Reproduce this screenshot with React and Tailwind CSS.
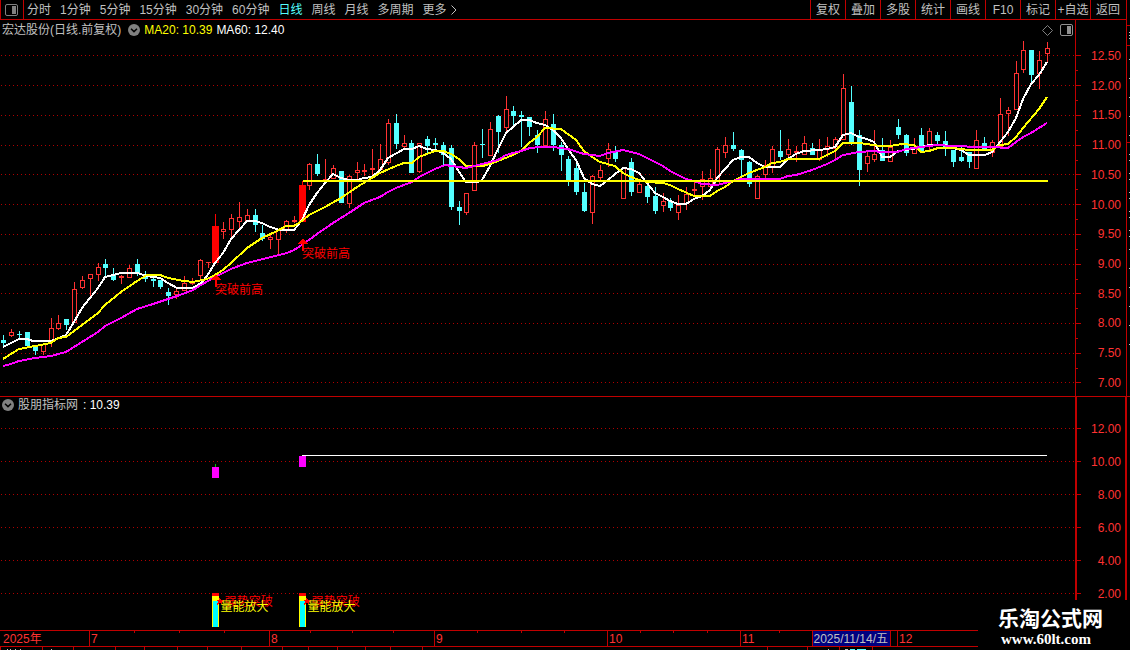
/**
 * ========================================
 * K线图 - 日线
 * ========================================
 */

const PERIODS = ["分时", "1分钟", "5分钟", "15分钟", "30分钟", "60分钟", "日线", "周线", "月线", "多周期"];

const TOOLS = ["复权", "叠加", "多股", "统计", "画线", "F10", "标记", "+自选", "返回"];

const PRICE_LABELS = ["12.50", "12.00", "11.50", "11.00", "10.50", "10.00", "9.50", "9.00", "8.50", "8.00", "7.50", "7.00"];
const PRICE_LINES = [55, 85, 115, 145, 174, 204, 234, 264, 293, 323, 353, 382];

const SUB_LABELS = ["12.00", "10.00", "8.00", "6.00", "4.00", "2.00"];
const SUB_LINES = [428, 461, 494, 527, 560, 593];

// [x, high, body top, body bottom, low, kind]  u = up, d = down, s = breakout
const CANDLES = [
  [3, 335, 340, 343, 347, "d"], [11, 329, 332, 336, 337, "u"], [19, 331, 334, 335, 338, "d"],
  [27, 332, 332, 346, 346, "d"], [35, 346, 346, 351, 355, "d"], [43, 344, 344, 352, 355, "u"],
  [51, 318, 328, 342, 347, "u"], [58, 315, 323, 329, 330, "u"], [66, 319, 319, 325, 330, "d"],
  [74, 282, 289, 323, 323, "u"], [82, 276, 280, 288, 289, "u"], [90, 274, 274, 279, 296, "u"],
  [98, 263, 267, 275, 281, "u"], [105, 259, 264, 268, 276, "d"], [113, 268, 274, 280, 281, "d"],
  [121, 275, 276, 278, 284, "u"], [129, 265, 268, 278, 278, "u"], [137, 259, 264, 273, 276, "d"],
  [145, 271, 276, 279, 282, "d"], [153, 277, 279, 281, 287, "d"], [160, 280, 280, 287, 289, "d"],
  [168, 288, 292, 296, 305, "d"], [176, 289, 291, 295, 299, "u"], [184, 276, 283, 291, 291, "u"],
  [192, 278, 282, 284, 285, "u"], [200, 259, 260, 276, 280, "u"], [208, 262, 262, 263, 268, "u"],
  [215, 214, 226, 263, 263, "s"], [223, 222, 229, 232, 239, "u"], [231, 214, 218, 230, 238, "u"],
  [239, 202, 217, 222, 229, "u"], [247, 209, 215, 221, 221, "u"], [255, 209, 215, 225, 232, "d"],
  [262, 225, 233, 239, 241, "d"], [270, 235, 237, 240, 249, "u"], [278, 230, 230, 240, 254, "u"],
  [286, 220, 221, 230, 233, "u"], [294, 216, 220, 222, 223, "u"], [302, 181, 185, 222, 222, "s"],
  [309, 163, 164, 186, 190, "u"], [317, 154, 164, 174, 176, "d"], [325, 159, 179, 180, 180, "u"],
  [333, 165, 168, 179, 179, "u"], [341, 171, 171, 203, 203, "d"], [349, 175, 176, 204, 208, "u"],
  [357, 162, 170, 173, 179, "u"], [364, 164, 170, 172, 176, "u"], [372, 149, 168, 170, 176, "u"],
  [380, 144, 159, 170, 170, "u"], [388, 119, 123, 163, 165, "u"], [396, 114, 123, 144, 149, "d"],
  [404, 135, 143, 147, 149, "u"], [411, 140, 143, 173, 173, "d"], [419, 143, 143, 172, 173, "u"],
  [427, 136, 139, 146, 153, "d"], [435, 138, 143, 145, 150, "d"], [443, 142, 145, 155, 165, "d"],
  [451, 145, 148, 207, 210, "d"], [459, 201, 207, 211, 225, "d"], [466, 193, 193, 213, 215, "u"],
  [474, 142, 145, 191, 191, "u"], [482, 129, 144, 145, 158, "d"], [490, 122, 129, 156, 156, "u"],
  [498, 115, 116, 132, 153, "d"], [506, 96, 109, 128, 132, "u"], [513, 106, 111, 116, 126, "d"],
  [521, 111, 115, 117, 147, "d"], [529, 117, 117, 127, 136, "d"], [537, 130, 135, 145, 153, "d"],
  [545, 111, 119, 146, 146, "u"], [553, 114, 124, 145, 151, "d"], [561, 142, 145, 155, 171, "d"],
  [568, 156, 159, 181, 186, "d"], [576, 159, 168, 192, 195, "d"], [584, 183, 192, 211, 212, "d"],
  [592, 175, 176, 213, 224, "u"], [600, 165, 170, 178, 182, "u"], [608, 143, 149, 159, 167, "u"],
  [615, 146, 151, 159, 162, "d"], [623, 167, 168, 199, 199, "u"], [631, 158, 162, 192, 196, "d"],
  [639, 180, 184, 193, 193, "u"], [647, 183, 186, 197, 203, "d"], [655, 187, 196, 211, 214, "d"],
  [663, 193, 201, 206, 212, "u"], [670, 198, 201, 208, 211, "d"], [678, 195, 205, 213, 220, "u"],
  [686, 187, 194, 204, 210, "u"], [694, 180, 189, 191, 195, "u"], [702, 171, 179, 187, 200, "u"],
  [710, 169, 178, 187, 190, "u"], [717, 147, 149, 185, 185, "u"], [725, 137, 145, 153, 158, "u"],
  [733, 132, 145, 149, 151, "d"], [741, 149, 150, 160, 176, "d"], [749, 161, 162, 184, 187, "d"],
  [757, 175, 176, 199, 199, "u"], [765, 160, 165, 175, 179, "u"], [772, 146, 149, 167, 173, "u"],
  [780, 130, 151, 157, 160, "d"], [788, 139, 149, 155, 158, "u"], [796, 146, 151, 153, 162, "u"],
  [804, 136, 143, 155, 155, "u"], [812, 143, 148, 155, 155, "d"], [819, 139, 149, 160, 161, "u"],
  [827, 137, 146, 150, 157, "u"], [835, 137, 139, 149, 160, "u"], [843, 74, 88, 140, 140, "u"],
  [851, 86, 102, 144, 145, "d"], [859, 130, 135, 170, 186, "d"], [867, 152, 156, 164, 172, "u"],
  [874, 130, 154, 160, 162, "u"], [882, 138, 150, 161, 161, "d"], [890, 140, 147, 162, 162, "u"],
  [898, 119, 127, 135, 139, "d"], [906, 134, 135, 153, 156, "d"], [914, 138, 148, 154, 154, "u"],
  [921, 128, 135, 151, 151, "d"], [929, 128, 131, 145, 150, "u"], [937, 132, 135, 141, 145, "d"],
  [945, 131, 141, 149, 156, "d"], [953, 150, 150, 162, 167, "d"], [961, 145, 157, 161, 162, "d"],
  [969, 152, 152, 162, 168, "d"], [976, 130, 140, 169, 169, "u"], [984, 137, 143, 150, 150, "d"],
  [992, 140, 142, 153, 157, "u"], [1000, 98, 114, 147, 147, "u"], [1008, 107, 110, 114, 136, "u"],
  [1016, 61, 73, 110, 110, "u"], [1023, 41, 50, 70, 73, "u"], [1031, 50, 50, 75, 82, "d"],
  [1039, 51, 60, 74, 89, "u"], [1047, 42, 48, 54, 62, "u"],
];

const MA_SHORT =
  "3,347 19,339 27,339 33,341 51,341 66,335 74,322 82,308 98,288 105,277 121,273 137,273 147,276 160,278 168,283 177,288 193,288 201,283 207,276 215,263 223,253 231,239 239,230 247,221 255,221 262,223 270,227 280,230 294,230 302,220 309,205 317,193 325,183 333,174 341,178 349,180 357,180 364,178 372,177 380,170 388,158 404,149 412,149 419,146 427,149 435,150 443,153 451,159 459,172 466,182 478,182 482,180 490,166 498,149 506,133 513,127 521,120 529,120 537,123 545,125 553,130 561,138 568,149 576,160 584,178 592,184 600,186 608,180 615,174 623,168 631,169 639,173 647,183 655,193 663,197 670,201 678,204 686,204 694,199 702,196 710,190 717,178 725,169 733,160 741,157 749,157 757,163 765,167 780,167 788,159 796,154 804,151 819,150 827,149 835,147 843,135 851,133 859,137 867,139 874,142 882,157 890,157 898,151 913,149 921,147 929,145 945,145 953,148 961,150 969,155 985,155 992,152 1000,142 1008,132 1016,118 1023,99 1031,84 1039,75 1047,62";

const MA_MID =
  "3,359 19,349 35,346 51,343 58,338 66,337 82,325 98,313 105,305 121,292 137,281 147,275 160,275 168,278 184,281 193,282 207,279 215,275 223,270 231,263 247,248 262,238 277,231 286,226 294,226 302,221 309,215 325,207 341,198 357,187 367,181 380,173 396,166 404,163 412,163 419,157 435,151 443,151 451,154 459,159 466,166 483,166 498,161 513,155 521,151 529,143 537,137 545,128 561,129 576,140 584,151 592,157 600,162 615,166 623,173 631,177 639,180 647,182 663,183 670,185 678,189 694,196 710,196 717,191 725,187 733,181 749,173 765,167 772,163 780,162 788,159 819,159 827,155 835,151 843,143 859,143 874,145 880,146 890,146 902,144 914,145 921,152 929,151 938,148 953,148 969,150 992,150 1000,145 1008,144 1016,137 1023,128 1039,109 1047,97";

const MA_LONG =
  "3,366 11,364 19,361 35,358 51,356 66,352 82,342 98,332 105,326 121,318 137,309 153,304 168,299 180,295 193,290 201,285 215,277 231,269 247,263 263,259 287,253 294,250 302,245 317,234 333,223 349,213 364,203 380,197 388,192 396,188 412,182 419,177 435,169 445,165 466,168 482,164 498,160 506,155 521,151 530,148 540,147 553,147 568,149 584,154 600,156 608,153 623,150 639,154 663,166 670,171 686,179 694,181 702,184 717,185 725,183 741,179 757,179 780,179 788,176 796,175 812,170 827,164 835,160 843,155 859,152 873,151 882,152 897,152 907,149 921,147 937,145 953,146 980,147 992,147 1008,148 1016,142 1023,137 1031,133 1047,123";

const MINOR_DATES = [134, 179, 224, 310, 352, 393, 477, 521, 564, 640, 673, 707, 779];
const FOOT_TICKS = [0, 42, 73, 115, 144, 177, 207, 241, 282, 308, 337, 365, 390, 422, 767, 807, 839, 872];
const SIDE_MARKS = [32, 35, 38, 59, 78, 97, 116, 135, 154, 160, 173, 179, 192, 198, 211, 217, 230, 236, 249, 268, 287, 306, 325, 344];

const PanelIcon = ({ className }) => (
  <svg viewBox="0 0 13 12" className={className} aria-hidden="true">
    <rect x="0.5" y="0.5" width="12" height="11" rx="1.5" fill="none" stroke="currentColor" />
    <rect x="7" y="2" width="4" height="8" fill="currentColor" />
  </svg>
);

const ToggleButton = ({ label }) => (
  <button type="button" aria-label={label} className="shrink-0">
    <svg viewBox="0 0 12 12" className="block w-3 h-3">
      <circle cx="6" cy="6" r="6" fill="#808080" />
      <path d="M3 4.8 L6 7.6 L9 4.8" fill="none" stroke="#000" strokeWidth="1.5" />
    </svg>
  </button>
);

const GridLines = ({ lines }) =>
  lines.map((y) => (
    <line key={y} x1="1" x2="1075" y1={y + 0.5} y2={y + 0.5} stroke="#b00000" strokeDasharray="1 3" />
  ));

const Candle = ({ data }) => {
  const [x, high, top, bottom, low, kind] = data;
  const color = kind === "d" ? "#54ffff" : kind === "s" ? "#ff0000" : "#ff3232";
  const hollow = kind === "u" && bottom - top > 2;
  const half = kind === "s" ? 3 : 2;

  return (
    <g>
      <rect x={x} y={high} width="1" height={Math.max(low - high, 1)} fill={color} />
      {hollow ? (
        <rect x={x - 1.5} y={top + 0.5} width="4" height={bottom - top - 1} fill="#000" stroke={color} />
      ) : (
        <rect x={x - half} y={top} width={half * 2 + 1} height={bottom - top} fill={color} />
      )}
    </g>
  );
};

const BuyArrow = ({ x, y }) => (
  <path d={`M${x} ${y} l5 6 h-4 v7 h-2 v-7 h-4 z`} fill="#ff0000" />
);

const VolumeBar = ({ x }) => (
  <g>
    <rect x={x} y="593" width="7" height="34" fill="#ffff00" />
    <rect x={x} y="593" width="7" height="3" fill="#ff0000" />
    <rect x={x + 1} y="601" width="5" height="26" fill="#00ffff" />
    <path
      d={`M${x + 8} 597 l1 3 h3 l-2 2 l1 3 l-3 -2 l-3 2 l1 -3 l-2 -2 h3 z`}
      fill="#ff0000"
    />
  </g>
);

const Toolbar = () => (
  <header className="flex h-5 items-stretch border-b border-[#c00000] pr-px text-[#c0c0c0]">
    <button type="button" aria-label="侧栏" className="w-6 shrink-0 border-x border-[#c00000] pl-1">
      <PanelIcon className="block h-3 w-[13px] text-[#808080]" />
    </button>
    <nav className="flex grow items-center gap-[9px] pl-[3px]">
      {PERIODS.map((name) => (
        <button key={name} type="button" className={name === "日线" ? "text-[#54ffff]" : ""}>
          {name}
        </button>
      ))}
      <button type="button" className="flex items-center gap-1">
        更多
        <svg viewBox="0 0 6 10" className="h-[10px] w-[6px]" aria-hidden="true">
          <path d="M0.5 0.5 L5 5 L0.5 9.5" fill="none" stroke="currentColor" />
        </svg>
      </button>
    </nav>
    {TOOLS.map((name) => (
      <button key={name} type="button" className="w-[35px] shrink-0 border-l border-[#c00000] text-center">
        {name}
      </button>
    ))}
  </header>
);

const PriceChart = () => (
  <section className="flex">
    <div className="min-w-0 grow">
      {/* 标题行 */}
      <div className="flex h-5 items-center pl-0.5 pr-[2px] text-[#c0c0c0]">
        <h1 className="mr-[7px]">宏达股份(日线.前复权)</h1>
        <ToggleButton label="指标菜单" />
        <span className="ml-1 text-[#ffff00]">MA20: 10.39</span>
        <span className="ml-1 grow text-white">MA60: 12.40</span>
        <svg viewBox="0 0 11 11" className="mr-[7px] h-[11px] w-[11px]" aria-hidden="true">
          <path d="M5.5 0.5 L10.5 5.5 L5.5 10.5 L0.5 5.5 Z" fill="none" stroke="#808080" />
        </svg>
        <PanelIcon className="h-3 w-[13px] text-[#909090]" />
      </div>

      {/* K线 */}
      <div className="relative">
        <svg
          viewBox="0 40 1075 356"
          preserveAspectRatio="none"
          shapeRendering="crispEdges"
          className="block h-[356px] w-full"
        >
          <GridLines lines={PRICE_LINES} />
          {CANDLES.map((c) => (
            <Candle key={c[0]} data={c} />
          ))}
          <g fill="none" strokeWidth="2">
            <polyline points={MA_SHORT} stroke="#ffffff" />
            <polyline points={MA_MID} stroke="#ffff00" />
            <polyline points={MA_LONG} stroke="#ff00ff" />
            <line x1="303" x2="1048" y1="181" y2="181" stroke="#ffff00" />
          </g>
          <BuyArrow x={216} y={274} />
          <BuyArrow x={303} y={238} />
        </svg>
        <span className="absolute left-[20%] top-[242px] text-[#ff0000]">突破前高</span>
        <span className="absolute left-[28.1%] top-[206px] text-[#ff0000]">突破前高</span>
      </div>
    </div>

    {/* 价格轴 */}
    <div className="flex w-[51px] shrink-0 border-l border-[#c00000]">
      <svg viewBox="0 20 6 376" shapeRendering="crispEdges" className="h-[376px] w-[6px]">
        {PRICE_LINES.map((y) => (
          <g key={y} fill="#c00000">
            <rect x="0" y={y} width="5" height="1" />
            <rect x="0" y={y + 15} width="2" height="1" />
          </g>
        ))}
      </svg>
      <div className="flex grow flex-col justify-between pb-[5px] pr-[5px] pt-7 text-right text-[#ff3232]">
        {PRICE_LABELS.map((label) => (
          <span key={label}>{label}</span>
        ))}
      </div>
    </div>
  </section>
);

const SubChart = () => (
  <section className="flex border-t border-[#c00000]">
    <div className="min-w-0 grow">
      <div className="flex h-4 items-center pl-0.5 text-[#c0c0c0]">
        <ToggleButton label="副图菜单" />
        <h2 className="ml-1">股朋指标网</h2>
        <span className="ml-[5px] text-white">: 10.39</span>
      </div>

      <div className="relative">
        <svg
          viewBox="0 413 1075 217"
          preserveAspectRatio="none"
          shapeRendering="crispEdges"
          className="block h-[217px] w-full"
        >
          <GridLines lines={SUB_LINES} />
          <rect x="215" y="464" width="1" height="3" fill="#00c000" />
          <rect x="212" y="467" width="7" height="11" fill="#ff00ff" />
          <rect x="299" y="456" width="7" height="11" fill="#ff00ff" />
          <rect x="302" y="455" width="745" height="1" fill="#ffffff" />
          <VolumeBar x={212} />
          <VolumeBar x={299} />
        </svg>
        <span className="absolute left-[20.9%] top-[181px] text-[#ff0000]">强势突破</span>
        <span className="absolute left-[29%] top-[181px] text-[#ff0000]">强势突破</span>
        <span className="absolute left-[20.5%] top-[186px] text-[#ffff00]">量能放大</span>
        <span className="absolute left-[28.6%] top-[186px] text-[#ffff00]">量能放大</span>
      </div>
    </div>

    <div className="flex w-[51px] shrink-0 border-l-2 border-r border-[#c00000]">
      <svg viewBox="0 397 5 233" shapeRendering="crispEdges" className="h-[233px] w-[5px]">
        {SUB_LINES.map((y) => (
          <rect key={y} x="0" y={y} width="4" height="1" fill="#c00000" />
        ))}
      </svg>
      <div className="flex grow flex-col justify-between pb-7 pr-1 pt-6 text-right text-[#ff3232]">
        {SUB_LABELS.map((label) => (
          <span key={label}>{label}</span>
        ))}
      </div>
    </div>
  </section>
);

const TimeAxis = () => (
  <footer>
    <div className="relative h-4 border-t border-[#c00000] text-[#ff3232]">
      <div className="grid h-full grid-cols-[89fr_180fr_165fr_173fr_133fr_157fr_233fr] leading-4">
        <span className="pl-[3px]">2025年</span>
        <span className="border-l border-[#c00000] pl-px">7</span>
        <span className="border-l border-[#c00000] pl-px">8</span>
        <span className="border-l border-[#c00000] pl-px">9</span>
        <span className="border-l border-[#c00000] pl-px">10</span>
        <span className="border-l border-[#c00000] pl-px">11</span>
        <span className="border-l border-[#c00000] pl-px">12</span>
      </div>
      <svg
        viewBox="0 0 1130 2"
        preserveAspectRatio="none"
        shapeRendering="crispEdges"
        className="absolute left-0 top-0 h-[2px] w-full"
      >
        {MINOR_DATES.map((x) => (
          <rect key={x} x={x} y="0" width="1" height="2" fill="#c00000" />
        ))}
      </svg>
      {/* 光标日期 */}
      <time className="absolute left-[71.9%] top-0 h-[15px] w-[79px] whitespace-nowrap border-x border-[#c00000] bg-[#000080] leading-4 text-[#c0c0c0]">
        2025/11/14/五
      </time>
    </div>
    <svg
      viewBox="0 0 1130 3"
      preserveAspectRatio="none"
      shapeRendering="crispEdges"
      className="block h-1 w-full border-t border-[#c00000]"
    >
      {FOOT_TICKS.map((x) => (
        <rect key={x} x={x} y="0" width="1" height="3" fill="#c00000" />
      ))}
      <path d="M7 2.5h1M10 2.5h1M15 2.5h1M20 2.5h1M51 2.5h1M828 2.5h1M845 2.5h3" stroke="#c0c0c0" />
      <path d="M850 2.5h5M857 2.5h9" stroke="#54ffff" />
    </svg>
  </footer>
);

// 右侧盘口边缘
const SideEdge = () => (
  <aside className="w-1 shrink-0 border-l border-[#c00000]">
    <svg viewBox="0 0 3 630" shapeRendering="crispEdges" className="block h-[630px] w-[3px]">
      {[25, 45, 142, 396].map((y) => (
        <rect key={y} x="0" y={y} width="3" height="1" fill="#c00000" />
      ))}
      {SIDE_MARKS.map((y) => (
        <rect key={y} x="2" y={y} width="1" height="1" fill="#c0c0c0" />
      ))}
    </svg>
  </aside>
);

export default function App() {
  return (
    <div className="relative min-h-screen overflow-hidden bg-black text-[12px] leading-4 font-['Liberation_Sans','Noto_Sans_CJK_SC',sans-serif]">
      <div className="flex">
        <main className="min-w-0 grow">
          <Toolbar />
          <PriceChart />
          <SubChart />
        </main>
        <SideEdge />
      </div>
      <TimeAxis />

      {/* 水印 */}
      <div className="absolute bottom-0 right-0 flex h-[50px] w-[152px] flex-col bg-black pl-5 pt-[7px] text-white">
        <strong className="text-[21px] leading-6">乐淘公式网</strong>
        <a href="#" className="pl-[3px] font-['Liberation_Serif',serif] text-[15px] font-bold leading-4">
          www.60lt.com
        </a>
      </div>
    </div>
  );
}
